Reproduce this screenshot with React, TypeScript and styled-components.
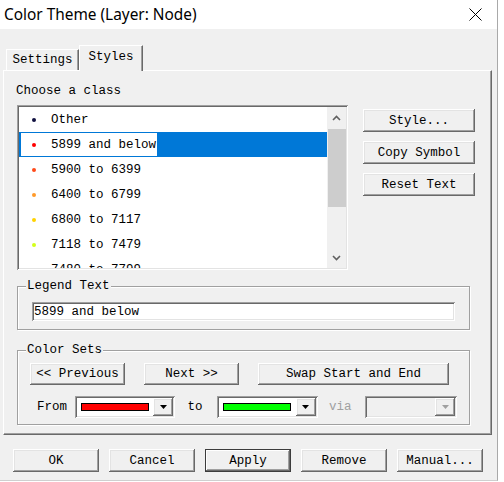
import React from "react";
import styled, { createGlobalStyle, css } from "styled-components";

const Global = createGlobalStyle`
  html, body { margin: 0; padding: 0; background: #ffffff; }
  body { width: 504px; height: 482px; overflow: hidden; font-family: "Liberation Mono", "DejaVu Sans Mono", monospace; }
  * { box-sizing: border-box; }
`;

const raised = css`
  background: #f0f0f0;
  box-shadow: inset -1px -1px #696969, inset 1px 1px #ffffff, inset -2px -2px #a0a0a0, inset 2px 2px #e3e3e3;
`;

const sunken = css`
  box-shadow: inset 1px 1px #a0a0a0, inset -1px -1px #ffffff, inset 2px 2px #696969, inset -2px -2px #e3e3e3;
`;

const Window = styled.div`
  width: 498px;
  height: 481px;
  display: flex;
  flex-direction: column;
  border-right: 1px solid #a9a9a9;
  border-bottom: 1px solid #cfcfcf;
  background: #f0f0f0;
`;

const TitleBar = styled.div`
  height: 29px;
  flex: none;
  background: #ffffff;
  display: flex;
  align-items: center;
  justify-content: space-between;
  padding: 0 15px 1px 4px;
`;

const Title = styled.span`
  font-family: "Noto Sans", "Open Sans", sans-serif;
  font-size: 15.4px;
  color: #000000;
`;

const Body = styled.div`
  flex: 1;
  display: flex;
  flex-direction: column;
  padding: 16px 5px 0 3px;
`;

const TabStrip = styled.div`
  display: flex;
  align-items: flex-end;
  height: 25px;
  flex: none;
  padding-left: 3px;
`;

const Tab = styled.div<{ $active?: boolean; $w: number }>`
  width: ${(p) => p.$w}px;
  height: ${(p) => (p.$active ? 26 : 21)}px;
  margin-bottom: ${(p) => (p.$active ? -1 : 0)}px;
  position: relative;
  z-index: ${(p) => (p.$active ? 1 : 0)};
  background: #f0f0f0;
  display: flex;
  align-items: center;
  justify-content: center;
  padding-bottom: ${(p) => (p.$active ? 3 : 0)}px;
  font-size: 12.5px;
  color: #000;
  border-top: 1px solid #ffffff;
  border-left: 1px solid #ffffff;
  border-right: 1px solid #696969;
  box-shadow: inset -1px 0 #a0a0a0;
`;

const Panel = styled.div`
  height: 365px;
  flex: none;
  border-top: 1px solid #ffffff;
  border-left: 1px solid #ffffff;
  border-right: 1px solid #696969;
  border-bottom: 1px solid #696969;
  box-shadow: inset -1px -1px #a0a0a0;
  padding: 13px 0 0 12px;
  display: flex;
  flex-direction: column;
`;

const Caption = styled.div`
  font-size: 12.5px;
  line-height: 14px;
  height: 14px;
  color: #000;
`;

const ListArea = styled.div`
  display: flex;
  margin-top: 7px;
  margin-left: 1px;
`;

const ListBox = styled.div`
  width: 331px;
  height: 165px;
  padding: 2px;
  display: flex;
  background: #ffffff;
  ${sunken};
`;

const Rows = styled.div`
  flex: 1;
  overflow: hidden;
  display: flex;
  flex-direction: column;
`;

const Row = styled.div<{ $selected?: boolean }>`
  height: 25px;
  flex: none;
  display: flex;
  padding: 1px 0 1px 2px;
  background: ${(p) => (p.$selected ? "#0078d7" : "transparent")};
`;

const Cell = styled.div<{ $selected?: boolean }>`
  display: flex;
  align-items: center;
  padding: 1px 1px 0 11px;
  background: ${(p) => (p.$selected ? "#ffffff" : "transparent")};
  font-size: 12.5px;
  color: #000;
  white-space: pre;
`;

const Dot = styled.span<{ $c: string }>`
  width: 4px;
  height: 4px;
  border-radius: 50%;
  background: ${(p) => p.$c};
  margin-right: 15px;
  flex: none;
`;

const ScrollBar = styled.div`
  width: 19px;
  display: flex;
  flex-direction: column;
  background: #f0f0f0;
`;

const ArrowBox = styled.div<{ $h: number }>`
  height: ${(p) => p.$h}px;
  display: flex;
  align-items: center;
  justify-content: center;
  flex: none;
`;

const Thumb = styled.div`
  height: 78px;
  margin-left: 1px;
  background: #cdcdcd;
  flex: none;
`;

const Spacer = styled.div`
  flex: 1;
`;

const SideButtons = styled.div`
  display: flex;
  flex-direction: column;
  gap: 9px;
  margin: 4px 0 0 15px;
`;

const Button = styled.button<{ $w: number; $h?: number; $default?: boolean }>`
  width: ${(p) => p.$w}px;
  height: ${(p) => p.$h ?? 23}px;
  flex: none;
  border: none;
  padding: 0;
  margin: 0;
  font-family: "Liberation Mono", "DejaVu Sans Mono", monospace;
  font-size: 12.5px;
  color: #000;
  white-space: pre;
  ${raised};
  ${(p) =>
    p.$default &&
    css`
      box-shadow: inset 0 0 0 1px #3c3c3c, inset -2px -2px #696969, inset 2px 2px #ffffff,
        inset -3px -3px #a0a0a0;
    `}
`;

const Group = styled.fieldset<{ $mt: number }>`
  margin: ${(p) => p.$mt}px 0 0 1px;
  width: 453px;
  padding: 0;
  min-width: 0;
  border: 1px solid #a0a0a0;
  box-shadow: 1px 1px 0 #ffffff, inset 1px 1px 0 #ffffff;
`;

const Legend = styled.legend`
  margin-left: 8px;
  padding: 0 1px;
  font-size: 12.5px;
  line-height: 14px;
  background: #f0f0f0;
  color: #000;
`;

const GroupInner = styled.div<{ $pad: string; $gap?: number }>`
  padding: ${(p) => p.$pad};
  display: flex;
  flex-direction: column;
  gap: ${(p) => p.$gap ?? 0}px;
`;

const TextField = styled.div`
  width: 423px;
  height: 19px;
  padding: 1px 0 0 2px;
  display: flex;
  align-items: center;
  background: #ffffff;
  font-size: 12.5px;
  color: #000;
  white-space: pre;
  ${sunken};
`;

const ButtonRow = styled.div`
  display: flex;
  gap: 19px;
`;

const ComboRow = styled.div`
  display: flex;
  align-items: center;
  height: 22px;
`;

const Label = styled.span<{ $pl: number; $pr: number; $disabled?: boolean }>`
  padding: 0 ${(p) => p.$pr}px 0 ${(p) => p.$pl}px;
  font-size: 12.5px;
  color: ${(p) => (p.$disabled ? "#a0a0a0" : "#000")};
  white-space: pre;
`;

const Combo = styled.div<{ $w: number; $disabled?: boolean }>`
  width: ${(p) => p.$w}px;
  height: 22px;
  padding: 2px;
  display: flex;
  align-items: center;
  background: ${(p) => (p.$disabled ? "#f0f0f0" : "#ffffff")};
  ${sunken};
`;

const Swatch = styled.div<{ $c: string }>`
  width: 68px;
  height: 8px;
  margin-left: 4px;
  border: 1px solid #000;
  background: ${(p) => p.$c};
`;

const DropButton = styled.div`
  width: 20px;
  height: 18px;
  margin-left: auto;
  display: flex;
  align-items: center;
  justify-content: center;
  ${raised};
`;

const Footer = styled.div`
  display: flex;
  gap: 10px;
  margin: 14px 0 0 10px;
`;

const rows = [
  { c: "#101040", t: "Other" },
  { c: "#ff0000", t: "5899 and below", sel: true },
  { c: "#ff4a1a", t: "5900 to 6399" },
  { c: "#ff9a2a", t: "6400 to 6799" },
  { c: "#ffd200", t: "6800 to 7117" },
  { c: "#d4ff1a", t: "7118 to 7479" },
  { c: "#9cff1a", t: "7480 to 7799" },
];

const Chevron = ({ up }: { up?: boolean }) => (
  <svg width="9" height="6" viewBox="0 0 9 6">
    <polyline
      points={up ? "1,5 4.5,1.5 8,5" : "1,1 4.5,4.5 8,1"}
      fill="none"
      stroke="#606060"
      strokeWidth="1.6"
    />
  </svg>
);

const Tri = ({ c = "#000" }: { c?: string }) => (
  <svg width="7" height="4" viewBox="0 0 7 4">
    <polygon points="0,0 7,0 3.5,4" fill={c} />
  </svg>
);

const ColorCombo = ({ w, color, disabled }: { w: number; color?: string; disabled?: boolean }) => (
  <Combo $w={w} $disabled={disabled}>
    {color && <Swatch $c={color} />}
    <DropButton>
      <Tri c={disabled ? "#a0a0a0" : "#000"} />
    </DropButton>
  </Combo>
);

export default function App() {
  return (
    <>
      <Global />
      <Window>
        <TitleBar>
          <Title>Color Theme (Layer: Node)</Title>
          <svg width="13" height="13" viewBox="0 0 13 13">
            <path d="M0.5 0.5 L12.5 12.5 M12.5 0.5 L0.5 12.5" stroke="#000" strokeWidth="1" />
          </svg>
        </TitleBar>
        <Body>
          <TabStrip>
            <Tab $w={73}>Settings</Tab>
            <Tab $w={64} $active>
              Styles
            </Tab>
          </TabStrip>
          <Panel>
            <Caption>Choose a class</Caption>
            <ListArea>
              <ListBox>
                <Rows>
                  {rows.map((r) => (
                    <Row key={r.t} $selected={r.sel}>
                      <Cell $selected={r.sel}>
                        <Dot $c={r.c} />
                        {r.t}
                      </Cell>
                    </Row>
                  ))}
                </Rows>
                <ScrollBar>
                  <ArrowBox $h={22}>
                    <Chevron up />
                  </ArrowBox>
                  <Thumb />
                  <Spacer />
                  <ArrowBox $h={21}>
                    <Chevron />
                  </ArrowBox>
                </ScrollBar>
              </ListBox>
              <SideButtons>
                <Button $w={112}>Style...</Button>
                <Button $w={112}>Copy Symbol</Button>
                <Button $w={112}>Reset Text</Button>
              </SideButtons>
            </ListArea>
            <Group $mt={9}>
              <Legend>Legend Text</Legend>
              <GroupInner $pad="9px 14px 8px 14px">
                <TextField>5899 and below</TextField>
              </GroupInner>
            </Group>
            <Group $mt={13}>
              <Legend>Color Sets</Legend>
              <GroupInner $pad="6px 12px 6px 12px" $gap={11}>
                <ButtonRow>
                  <Button $w={95} $h={22}>
                    {"<< Previous"}
                  </Button>
                  <Button $w={95} $h={22}>
                    {"Next >>"}
                  </Button>
                  <Button $w={191} $h={22}>
                    Swap Start and End
                  </Button>
                </ButtonRow>
                <ComboRow>
                  <Label $pl={7} $pr={8}>
                    From
                  </Label>
                  <ColorCombo w={101} color="#ff0000" />
                  <Label $pl={12} $pr={14}>
                    to
                  </Label>
                  <ColorCombo w={102} color="#00ff00" />
                  <Label $pl={11} $pr={14} $disabled>
                    via
                  </Label>
                  <ColorCombo w={92} disabled />
                </ComboRow>
              </GroupInner>
            </Group>
          </Panel>
          <Footer>
            <Button $w={86}>OK</Button>
            <Button $w={86}>Cancel</Button>
            <Button $w={86} $default>
              Apply
            </Button>
            <Button $w={86}>Remove</Button>
            <Button $w={86}>Manual...</Button>
          </Footer>
        </Body>
      </Window>
    </>
  );
}
